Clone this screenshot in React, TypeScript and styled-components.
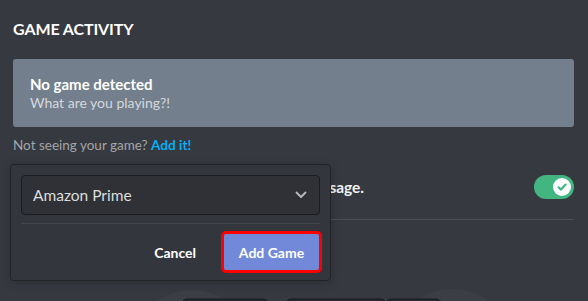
import styled, { createGlobalStyle } from 'styled-components';

const GlobalStyle = createGlobalStyle`
  html, body {
    margin: 0;
    padding: 0;
    background: #36393f;
  }
  body {
    font-family: Lato, "Open Sans", sans-serif;
    -webkit-font-smoothing: antialiased;
  }
`;

const Page = styled.div`
  position: relative;
  width: 588px;
  height: 301px;
  overflow: hidden;
  background: #36393f;
  padding: 19px 14px 0 13px;
  box-sizing: border-box;
`;

const Heading = styled.h2`
  margin: 0;
  font-size: 16px;
  line-height: 20px;
  font-weight: 700;
  color: #ffffff;
  text-transform: uppercase;
  letter-spacing: -0.1px;
`;

const GameCard = styled.div`
  margin-top: 20px;
  height: 68px;
  background: #747f8d;
  border-radius: 3px;
  padding: 0 17px;
  display: flex;
  flex-direction: column;
  justify-content: center;
`;

const CardTitle = styled.div`
  font-size: 15px;
  line-height: 19px;
  font-weight: 700;
  color: #ffffff;
`;

const CardSubtitle = styled.div`
  font-size: 14px;
  line-height: 18px;
  color: #d4d8dd;
`;

const HelpText = styled.div`
  margin-top: 9px;
  font-size: 13.5px;
  line-height: 18px;
  color: #a3a6aa;
`;

const HelpLink = styled.a`
  color: #00b0f4;
  font-weight: 700;
  text-decoration: none;
`;

const SettingRow = styled.div`
  margin-top: 21px;
  display: flex;
  align-items: center;
  justify-content: space-between;
  height: 24px;
`;

const SettingLabel = styled.div`
  font-size: 15.5px;
  letter-spacing: -0.1px;
  font-weight: 700;
  color: #f0f1f2;
`;

const Toggle = styled.div<{ $on: boolean }>`
  width: 40px;
  height: 24px;
  border-radius: 12px;
  background: ${props => props.$on ? '#43b581' : '#72767d'};
  display: flex;
  align-items: center;
  justify-content: ${props => props.$on ? 'flex-end' : 'flex-start'};
  padding: 0 3px;
  box-sizing: border-box;
`;

const Knob = styled.div`
  width: 18px;
  height: 18px;
  border-radius: 50%;
  background: #ffffff;
  display: flex;
  align-items: center;
  justify-content: center;
`;

const Divider = styled.div`
  margin-top: 20px;
  height: 1px;
  background: #4a4d53;
`;

const Illustration = styled.svg`
  display: block;
  margin: 63px 0 0 -13px;
`;

const Popout = styled.div`
  position: absolute;
  left: 10px;
  top: 164px;
  width: 321px;
  height: 117px;
  box-sizing: border-box;
  background: #33363c;
  border: 1px solid #222327;
  border-radius: 4px;
  padding: 10px 10px 0;
  box-shadow: 0 2px 10px rgba(0, 0, 0, 0.2);
`;

const Select = styled.div`
  height: 40px;
  box-sizing: border-box;
  background: #2f3136;
  border: 1px solid #1b1c1f;
  border-radius: 4px;
  display: flex;
  align-items: center;
  justify-content: space-between;
  padding: 0 12px 0 11px;
  font-size: 15.5px;
  color: #dcddde;
`;

const PopoutDivider = styled.div`
  margin-top: 8px;
  height: 1px;
  background: #42454b;
`;

const Footer = styled.div`
  display: flex;
  justify-content: flex-end;
  align-items: center;
  margin-top: 7px;
  margin-right: -2px;
`;

const TextButton = styled.button`
  background: none;
  border: none;
  padding: 0 25px;
  font-family: inherit;
  font-size: 14px;
  font-weight: 700;
  color: #ffffff;
  height: 38px;
`;

const PrimaryButton = styled.button`
  width: 101px;
  height: 42px;
  box-sizing: border-box;
  background: #7289da;
  border: 3px solid #ff0000;
  border-radius: 5px;
  font-family: inherit;
  font-size: 14px;
  font-weight: 700;
  color: #ffffff;
`;

export default function App() {
  return (
    <>
      <GlobalStyle />
      <Page>
        <Heading>Game Activity</Heading>
        <GameCard>
          <CardTitle>No game detected</CardTitle>
          <CardSubtitle>What are you playing?!</CardSubtitle>
        </GameCard>
        <HelpText>
          Not seeing your game? <HelpLink>Add it!</HelpLink>
        </HelpText>
        <SettingRow>
          <SettingLabel>Display currently running game as a status message.</SettingLabel>
          <Toggle $on>
            <Knob>
              <svg width="12" height="12" viewBox="0 0 12 12">
                <path d="M2.5 6.3 L5 8.6 L9.6 3.6" fill="none" stroke="#43b581" strokeWidth="2.2" strokeLinecap="round" strokeLinejoin="round" />
              </svg>
            </Knob>
          </Toggle>
        </SettingRow>
        <Divider />
        <Illustration width="588" height="25" viewBox="0 0 588 25">
          <circle cx="192" cy="68" r="61" fill="#3b3e45" />
          <circle cx="452" cy="68" r="62" fill="#3b3e45" />
          <rect x="183" y="16.5" width="84" height="14" rx="4" fill="#33363b" stroke="#1d1f23" strokeWidth="2" />
          <rect x="287" y="16.5" width="98" height="14" rx="4" fill="#3a3d43" stroke="#1d1f23" strokeWidth="2" />
          <rect x="387" y="16.5" width="53" height="14" rx="4" fill="#3a3d43" stroke="#1d1f23" strokeWidth="2" />
          <rect x="192" y="22" width="66" height="6" rx="2" fill="#2b2d31" />
        </Illustration>
        <Popout>
          <Select>
            <span>Amazon Prime</span>
            <svg width="12" height="8" viewBox="0 0 12 8">
              <path d="M1.5 1.5 L6 6 L10.5 1.5" fill="none" stroke="#b9bbbe" strokeWidth="1.8" strokeLinecap="round" strokeLinejoin="round" />
            </svg>
          </Select>
          <PopoutDivider />
          <Footer>
            <TextButton>Cancel</TextButton>
            <PrimaryButton>Add Game</PrimaryButton>
          </Footer>
        </Popout>
      </Page>
    </>
  );
}
